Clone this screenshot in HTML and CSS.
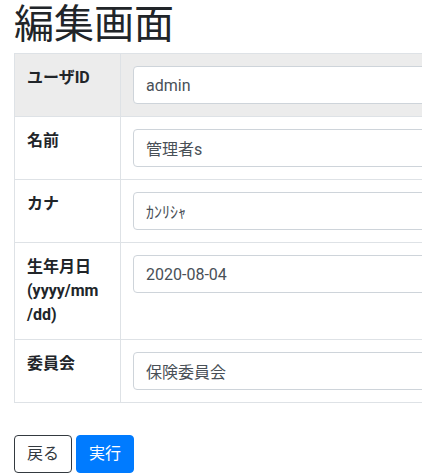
FILE: index.html
```html
<!DOCTYPE html>
<html lang="ja">
<head>
<meta charset="utf-8">
<title>編集画面</title>
<link rel="stylesheet" href="styles.css">
</head>
<body>
<div class="page">
  <h1 class="title">編集画面</h1>
  <table class="form-table">
    <colgroup><col class="col-label"><col class="col-field"></colgroup>
    <tr class="row-active">
      <th>ユーザID</th>
      <td><input class="field" type="text" value="admin"></td>
    </tr>
    <tr>
      <th>名前</th>
      <td><input class="field" type="text" value="管理者s"></td>
    </tr>
    <tr>
      <th>カナ</th>
      <td><input class="field" type="text" value="ｶﾝﾘｼｬ"></td>
    </tr>
    <tr>
      <th>生年月日<br>(yyyy/mm<br>/dd)</th>
      <td><input class="field" type="text" value="2020-08-04"></td>
    </tr>
    <tr>
      <th>委員会</th>
      <td><input class="field" type="text" value="保険委員会"></td>
    </tr>
  </table>
  <div class="actions">
    <button class="btn btn-back" type="button">戻る</button>
    <button class="btn btn-run" type="button">実行</button>
  </div>
</div>
</body>
</html>
```
FILE: styles.css
```css
html, body {
  margin: 0;
  overflow: hidden;
}
body {
  font-family: Roboto, "Noto Sans CJK JP", sans-serif;
  font-size: 16px;
  line-height: 1.5;
  color: #212529;
  background: #fff;
}
.page {
  width: 700px;
  padding: 0 14px;
}
.title {
  font-family: "Noto Sans CJK JP", sans-serif;
  font-size: 40px;
  font-weight: 400;
  line-height: 42px;
  margin: 0 0 11px;
}
.form-table {
  width: 100%;
  border-collapse: collapse;
  table-layout: fixed;
}
.col-label {
  width: 106px;
}
.form-table th,
.form-table td {
  border: 1px solid #dee2e6;
  padding: 12px;
  vertical-align: top;
  text-align: left;
}
.form-table th {
  font-weight: 700;
}
.row-active th,
.row-active td {
  background: #ececec;
}
.field {
  display: block;
  width: 100%;
  box-sizing: border-box;
  height: 38px;
  padding: 6px 12px;
  font: inherit;
  color: #495057;
  background: #fff;
  border: 1px solid #ced4da;
  border-radius: 4px;
}
.actions {
  display: flex;
  gap: 4px;
  margin-top: 32px;
}
.btn {
  font: inherit;
  line-height: 24px;
  padding: 6px 12px;
  border: 1px solid transparent;
  border-radius: 4px;
}
.btn-back {
  color: #343a40;
  background: #fff;
  border-color: #343a40;
}
.btn-run {
  color: #fff;
  background: #007bff;
  border-color: #007bff;
}
```
